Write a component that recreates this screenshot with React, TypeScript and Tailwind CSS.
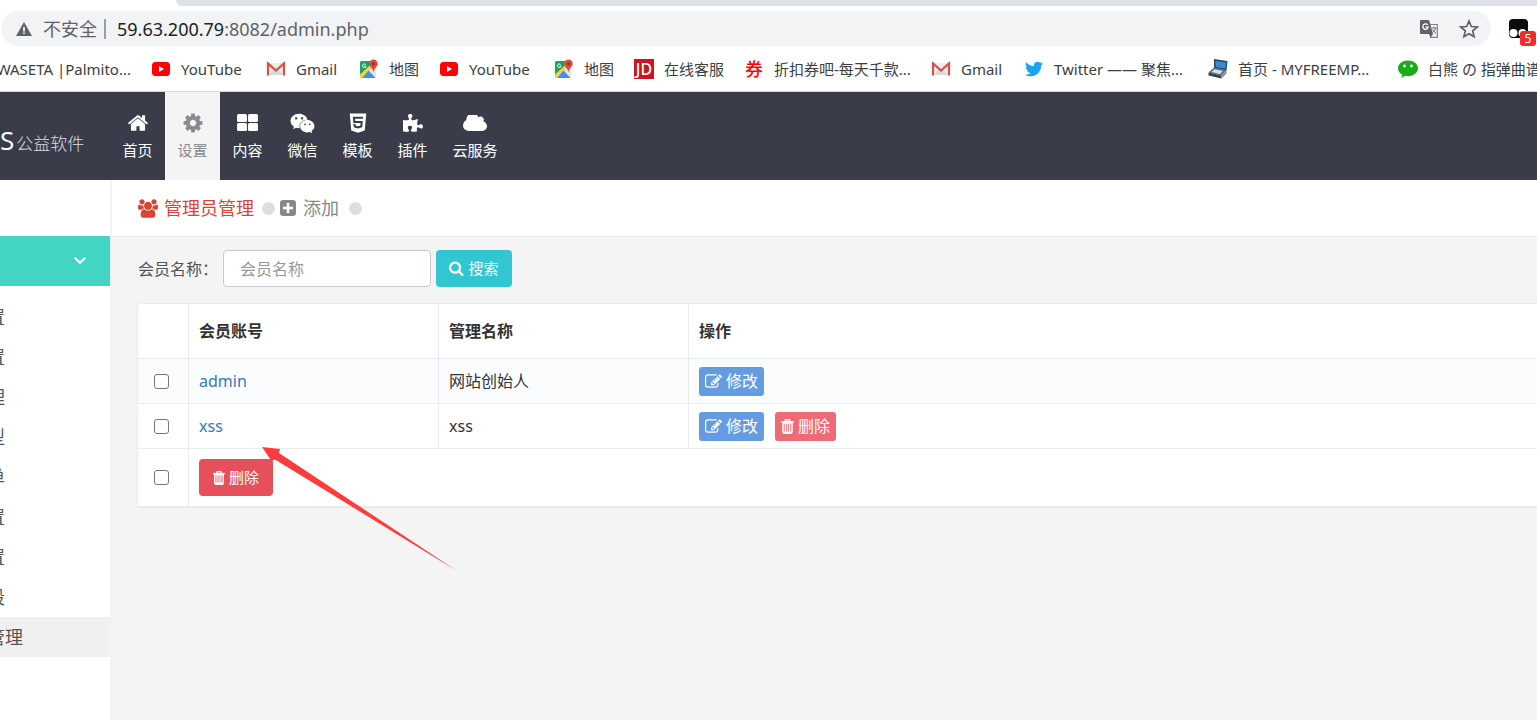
import React from "react";
import { FaHtml5, FaPuzzlePiece, FaTwitter, FaWeixin } from "react-icons/fa";

const HOME =
  "M1472 992v480q0 26-19 45t-45 19h-384v-384h-256v384h-384q-26 0-45-19t-19-45v-480q0-1 .5-3t.5-3l575-474 575 474q1 2 1 6zm223-69l-62 74q-8 9-21 11h-3q-13 0-21-7l-692-577-692 577q-12 8-24 7-13-2-21-11l-62-74q-8-10-7-23.5t11-21.5l719-599q32-26 76-26t76 26l244 204v-195q0-14 9-23t23-9h192q14 0 23 9t9 23v408l219 182q10 8 11 21.5t-7 23.5z";
const COG =
  "M1152 896q0-106-75-181t-181-75-181 75-75 181 75 181 181 75 181-75 75-181zm512-109v222q0 12-8 23t-20 13l-185 28q-19 54-39 91 35 50 107 138 10 12 10 25t-9 23q-27 37-99 108t-94 71q-12 0-26-9l-138-108q-44 23-91 38-16 136-29 186-7 28-36 28h-222q-14 0-24.5-8.5t-11.5-21.5l-28-184q-49-16-90-37l-141 107q-10 9-25 9-14 0-25-11-126-114-165-168-7-10-7-23 0-12 8-23 15-21 51-66.5t54-70.5q-27-50-41-99l-183-27q-13-2-21-12.5t-8-23.5v-222q0-12 8-23t19-13l186-28q14-46 39-92-40-57-107-138-10-12-10-24 0-10 9-23 26-36 98.5-107.5t94.5-71.5q13 0 26 10l138 107q44-23 91-38 16-136 29-186 7-28 36-28h222q14 0 24.5 8.5t11.5 21.5l28 184q49 16 90 37l142-107q9-9 24-9 13 0 25 10 129 119 165 170 7 8 7 22 0 12-8 23-15 21-51 66.5t-54 70.5q26 50 41 98l183 28q13 2 21 12.5t8 23.5z";
const CLOUD =
  "M1984 1152q0 159-112.5 271.5t-271.5 112.5h-1088q-185 0-316.5-131.5t-131.5-316.5q0-132 71-241.5t187-163.5q-2-28-2-43 0-212 150-362t362-150q158 0 286.5 88t187.5 230q70-62 166-62 106 0 181 75t75 181q0 75-41 138 129 30 213 134.5t84 239.5z";
const SEARCH =
  "M1216 832q0-185-131.5-316.5t-316.5-131.5-316.5 131.5-131.5 316.5 131.5 316.5 316.5 131.5 316.5-131.5 131.5-316.5zm512 832q0 52-38 90t-90 38q-54 0-90-38l-343-342q-179 124-399 124-143 0-273.5-55.5t-225-150-150-225-55.5-273.5 55.5-273.5 150-225 225-150 273.5-55.5 273.5 55.5 225 150 150 225 55.5 273.5q0 220-124 399l343 343q37 37 37 90z";
const USERS =
  "M529 896q-162 5-265 128h-134q-82 0-138-40.5t-56-118.5q0-353 124-353 6 0 43.5 21t97.5 42.5 119 21.5q67 0 133-23-5 37-5 66 0 159 90 256zm1071 637q0 120-73 189.5t-194 69.5h-874q-121 0-194-69.5t-73-189.5q0-53 3.5-103.5t14-109 26.5-108.5 43-97.5 62-81 85.5-53.5 111.5-20q10 0 43 21.5t73 48 107 48 135 21.5 135-21.5 107-48 73-48 43-21.5q61 0 111.5 20t85.5 53.5 62 81 43 97.5 26.5 108.5 14 109 3.5 103.5zm-1024-1277q0 106-75 181t-181 75-181-75-75-181 75-181 181-75 181 75 75 181zm704 384q0 159-112.5 271.5t-271.5 112.5-271.5-112.5-112.5-271.5 112.5-271.5 271.5-112.5 271.5 112.5 112.5 271.5zm576 225q0 78-56 118.5t-138 40.5h-134q-103-123-265-128 90-97 90-256 0-29-5-66 66 23 133 23 59 0 119-21.5t97.5-42.5 43.5-21q124 0 124 353zm-128-609q0 106-75 181t-181 75-181-75-75-181 75-181 181-75 181 75 75 181z";
const EDIT =
  "M888 1184l116-116-152-152-116 116v56h96v96h56zm440-720q-16-16-33 1l-350 350q-17 17-1 33t33-1l350-350q17-17 1-33zm80 594v190q0 119-84.5 203.5t-203.5 84.5h-832q-119 0-203.5-84.5t-84.5-203.5v-832q0-119 84.5-203.5t203.5-84.5h832q63 0 117 25 15 7 18 23 3 17-9 29l-49 49q-14 14-32 8-23-6-45-6h-832q-66 0-113 47t-47 113v832q0 66 47 113t113 47h832q66 0 113-47t47-113v-126q0-13 9-22l64-64q15-15 35-7t20 29zm-96-738l288 288-672 672h-288v-288zm444 132l-92 92-288-288 92-92q28-28 68-28t68 28l152 152q28 28 28 68t-28 68z";

function Glyph({ d, box = "0 0 1792 1792", className }: { d: string; box?: string; className: string }) {
  return (
    <svg viewBox={box} className={className} fill="currentColor" aria-hidden="true">
      <path d={d} />
    </svg>
  );
}

function Trash({ className }: { className: string }) {
  return (
    <svg viewBox="0 0 12 14" className={className} fill="none" stroke="currentColor" aria-hidden="true">
      <path d="M0 2.600h12" strokeWidth="1.500" />
      <path d="M1.800 2v10.200q0 1 1 1h6.400q1 0 1-1V2M4 2.300V1.200q0-.6.6-.6h2.800q.6 0 .6.6v1.100" strokeWidth="1.400" />
      <path d="M4 3v9M6 3v9M8 3v9" strokeWidth="1.200" />
      <path d="M2 3.500h8M2 12.500h8" strokeWidth="1.800" />
    </svg>
  );
}

function YouTube() {
  return (
    <svg viewBox="0 0 20 20" className="size-5" aria-hidden="true">
      <rect x="1" y="3" width="18" height="14" rx="3.500" fill="#f00" />
      <path d="M8 7v6l5-3z" fill="#fff" />
    </svg>
  );
}

function Gmail() {
  return (
    <svg viewBox="0 0 20 20" className="size-5" aria-hidden="true">
      <path d="M1 4h18v12H1z" fill="#ececec" />
      <path d="M3 16l5-6 2 1 2-1 5 6z" fill="#dadada" />
      <path d="M2 16.500V4.500l8 7 8-7v12" fill="none" stroke="#db5046" strokeWidth="2.200" />
    </svg>
  );
}

function Maps() {
  return (
    <svg viewBox="0 0 20 20" className="size-5" aria-hidden="true">
      <rect x="1" y="2" width="16" height="17" rx="1.500" fill="#e4e4e4" />
      <path d="M2.500 2H13L9 10 1 17V3.500Q1 2 2.500 2z" fill="#1da261" />
      <path d="M1 15.500 12.500 5l2 2L3 19H2q-1 0-1-1z" fill="#fcd043" />
      <path d="M3 19l6.500-7.500L16.500 19z" fill="#4a8af4" />
      <path d="M6.500 5.500A1.800 1.800 0 1 0 7 7.200H5.500" fill="none" stroke="#fff" strokeWidth="1" />
      <path d="M14.500.500a4.300 4.300 0 0 1 4.300 4.300c0 3-3.500 3.800-4.300 8.700-.8-4.900-4.300-5.700-4.300-8.700A4.300 4.300 0 0 1 14.500.500z" fill="#dd4b3e" />
      <circle cx="14.500" cy="4.800" r="1.500" fill="#822f2b" />
    </svg>
  );
}

function Jd() {
  return (
    <span className="flex size-5 items-center justify-center bg-[#c81623] text-base leading-5 font-medium text-white">
      JD
    </span>
  );
}

function Coupon() {
  return <span className="flex size-5 items-center justify-center text-lg leading-5 font-medium text-[#f00]">券</span>;
}

function Twitter() {
  return (
    <span className="flex size-5 items-center justify-center">
      <FaTwitter className="size-[18px] text-[#1da1f2]" />
    </span>
  );
}

function Scanner() {
  return (
    <svg viewBox="0 0 20 20" className="size-5" aria-hidden="true">
      <path d="M6 0l13.500 2-1 9.500-12.500-2z" fill="#1c4f7c" />
      <path d="M7.500 2l10.500 1.500-.8 6-9.400-1.500z" fill="#3f87c6" />
      <path d="M.500 13.500l5.500-5 12.500 2.500-5 5.500z" fill="#5f6e79" />
      <path d="M3.500 13l3-2.800 8.500 1.800-3 3z" fill="#cfe3f2" />
      <path d="M.500 13.500l13 3v3L.500 16.500z" fill="#39424a" />
      <path d="M13.500 16.500l5-5.500v3.500l-5 5z" fill="#8390a0" />
    </svg>
  );
}

function Bubble() {
  return (
    <svg viewBox="0 0 20 20" className="size-5" aria-hidden="true">
      <path d="M10 1.500c5.600 0 10 3.500 10 7.800s-4.400 7.900-10 7.900c-1 0-2-.1-2.900-.4L3.500 19l.8-3.300C1.700 14.300 0 12 0 9.300 0 5 4.400 1.500 10 1.500z" fill="#1aad19" />
      <circle cx="6.500" cy="7" r="1.400" fill="#fff" />
      <circle cx="13.500" cy="7" r="1.400" fill="#fff" />
    </svg>
  );
}

const bookmarks = [
  { label: "YouTube", Icon: YouTube, width: "w-[115px]" },
  { label: "Gmail", Icon: Gmail, width: "w-[93px]" },
  { label: "地图", Icon: Maps, width: "w-[80px]" },
  { label: "YouTube", Icon: YouTube, width: "w-[115px]" },
  { label: "地图", Icon: Maps, width: "w-[80px]" },
  { label: "在线客服", Icon: Jd, width: "w-[110px]" },
  { label: "折扣券吧-每天千款...", Icon: Coupon, width: "w-[187px]" },
  { label: "Gmail", Icon: Gmail, width: "w-[93px]" },
  { label: "Twitter —— 聚焦...", Icon: Twitter, width: "w-[184px]" },
  { label: "首页 - MYFREEMP...", Icon: Scanner, width: "w-[190px]" },
  { label: "白熊 の 指弹曲谱", Icon: Bubble, width: "w-[150px]" },
];

function Browser() {
  return (
    <div className="border-b border-[#d5d7da] bg-white">
      <div className="ml-[176px] h-[6px] rounded-bl-lg bg-[#dee1e6]" />
      <div className="flex items-center pt-[5px]">
        <div className="ml-px flex h-[35px] min-w-0 flex-1 items-center rounded-full bg-[#f1f3f4] pr-3 pl-[15px]">
          <svg viewBox="0 0 16 14" className="h-[14px] w-4" aria-hidden="true">
            <path d="M8 0l8 14H0z" fill="#5f6368" />
            <path d="M7.200 5h1.600v4.500H7.200zM7.200 10.500h1.600v1.600H7.200z" fill="#fff" />
          </svg>
          <span className="ml-[11px] text-lg leading-6 text-[#5f6368]">不安全</span>
          <span className="mx-[7px] h-5 w-[2px] bg-[#9a9da1]" />
          <span className="ml-1 flex-1 text-lg leading-6 text-[#5f6368]">
            <span className="text-[#202124]">59.63.200.79</span>:8082/admin.php
          </span>
          <button aria-label="翻译" className="mr-5">
            <svg viewBox="0 0 20 20" className="size-5" aria-hidden="true">
              <path d="M8 5.500h10.300v12.800H11" fill="#f1f3f4" stroke="#7d8185" strokeWidth="1.200" />
              <path d="M2 1h8l4 14H2q-1 0-1-1V2q0-1 1-1z" fill="#5f6368" />
              <path d="M10 15h4l-2.500 3.500z" fill="#5f6368" />
              <path d="M8.700 6A2.700 2.700 0 1 0 9.200 8.200H6.500" fill="none" stroke="#fff" strokeWidth="1.300" />
              <path d="M12.500 9h5M15 7.700V9M16.500 9c-.5 2.500-2 4-3 4.800M13.800 10.500c.5 1.500 2 3 3.200 4" fill="none" stroke="#6d7175" strokeWidth="1" />
            </svg>
          </button>
          <button aria-label="收藏">
            <svg viewBox="0 0 20 20" className="size-5" aria-hidden="true">
              <path d="M10 2l2.300 5.500 6 .5-4.600 3.900 1.400 5.900L10 14.700l-5.100 3.100 1.400-5.900L1.700 8l6-.5z" fill="none" stroke="#5f6368" strokeWidth="1.700" />
            </svg>
          </button>
        </div>
        <button aria-label="扩展程序" className="relative ml-[17px] h-[35px] w-[29px]">
          <svg viewBox="0 0 20 20" className="size-5" aria-hidden="true">
            <rect x="1" y="0" width="19" height="19" rx="4" fill="#0c0c0c" />
            <circle cx="5.500" cy="14" r="4" fill="#fff" />
            <circle cx="14.500" cy="14" r="4" fill="#fff" />
          </svg>
          <span className="absolute top-5 left-3 h-[15px] w-4 rounded-[3px] bg-[#ee2c2c] text-center text-xs leading-[15px] text-white">
            5
          </span>
        </button>
      </div>
      <nav className="flex h-[45px] items-center overflow-hidden text-[15px] leading-5 whitespace-nowrap text-[#3c4043]">
        <a href="#waseta" className="mr-5 flex w-[131px] shrink-0 justify-end">
          WASETA |Palmito...
        </a>
        {bookmarks.map(({ label, Icon, width }, i) => (
          <a key={i} href="#bookmark" className={`flex shrink-0 items-center gap-[10px] ${width}`}>
            <Icon />
            {label}
          </a>
        ))}
      </nav>
    </div>
  );
}

const tabs = [
  { label: "首页", width: "w-[55px]", active: false, icon: <Glyph d={HOME} className="size-[22px]" /> },
  { label: "设置", width: "w-[55px]", active: true, icon: <Glyph d={COG} className="size-[22px]" /> },
  {
    label: "内容",
    width: "w-[55px]",
    active: false,
    icon: (
      <svg viewBox="0 0 21 18" className="h-[18px] w-[21px]" fill="currentColor" aria-hidden="true">
        <rect width="10" height="8" rx="1.500" />
        <rect x="11" width="10" height="8" rx="1.500" />
        <rect y="9" width="10" height="8" rx="1.500" />
        <rect x="11" y="9" width="10" height="8" rx="1.500" />
      </svg>
    ),
  },
  { label: "微信", width: "w-[55px]", active: false, icon: <FaWeixin className="size-[25px]" /> },
  { label: "模板", width: "w-[55px]", active: false, icon: <FaHtml5 className="size-[22px]" /> },
  { label: "插件", width: "w-[55px]", active: false, icon: <FaPuzzlePiece className="size-5" /> },
  {
    label: "云服务",
    width: "w-[70px]",
    active: false,
    icon: <Glyph d={CLOUD} box="64 256 1920 1280" className="h-4 w-6" />,
  },
];

function Header() {
  return (
    <header className="flex h-[88px] bg-[#3a3d49] text-white">
      <div className="flex w-[110px] shrink-0 items-baseline pt-7">
        <span className="font-['Open_Sans','Noto_Sans',sans-serif] text-[26px] leading-10">S</span>
        <span className="ml-[2px] text-[17px] leading-10 font-light text-[#dcdde0]">公益软件</span>
      </div>
      <nav className="flex">
        {tabs.map((t) => (
          <a
            key={t.label}
            href="#tab"
            className={`flex flex-col items-center pt-[18px] text-[15px] leading-[22px] ${t.width} ${
              t.active ? "bg-[#f4f4f4] text-[#898b90]" : ""
            }`}
          >
            <span className="mb-[3px] flex h-[26px] items-center">{t.icon}</span>
            <span>{t.label}</span>
          </a>
        ))}
      </nav>
    </header>
  );
}

const menu = ["置", "置", "理", "型", "单", "置", "置", "段"];

function Sidebar() {
  return (
    <aside className="w-[110px] shrink-0 bg-white pt-14 text-lg text-[#555]">
      <button aria-label="展开菜单" className="flex h-[50px] w-full items-center justify-end bg-[#41d5c2] pr-6 text-white">
        <svg viewBox="0 0 12 12" className="size-3" fill="none" stroke="currentColor" strokeWidth="2.200" aria-hidden="true">
          <path d="M.800 2.800 6 7.800l5.200-5" />
        </svg>
      </button>
      <ul className="pt-[11px]">
        {menu.map((m, i) => (
          <li key={i}>
            <a href="#menu" className="flex h-10 w-[5px] items-center justify-end overflow-hidden">
              {m}
            </a>
          </li>
        ))}
        <li className="bg-[#f0f0f0]">
          <a href="#admins" className="flex h-10 w-[23px] items-center justify-end overflow-hidden whitespace-nowrap">
            管理
          </a>
        </li>
      </ul>
    </aside>
  );
}

function EditButton() {
  return (
    <button className="flex h-[29px] w-[65px] items-center justify-center gap-1 rounded-[3px] bg-[#659be0] text-base text-white">
      <Glyph d={EDIT} box="0 0 1792 1664" className="h-4 w-[17px]" />
      修改
    </button>
  );
}

function Check({ label }: { label: string }) {
  return (
    <input
      type="checkbox"
      aria-label={label}
      className="mx-[6px] block size-[15px] appearance-none rounded-[3px] border border-[#767676] bg-white checked:bg-[#659be0]"
    />
  );
}

function Members() {
  const cell = "border-r border-b border-[#e7ecf1] px-[10px] text-left";
  const last = "border-b border-[#e7ecf1] px-[10px] text-left";
  return (
    <table className="w-full table-fixed border-separate border-spacing-0 rounded-tl border-t border-l border-[#e7ecf1] bg-white text-base text-[#333] shadow-[0_1px_1px_rgba(0,0,0,0.05)]">
      <colgroup>
        <col className="w-[51px]" />
        <col className="w-[250px]" />
        <col className="w-[250px]" />
        <col />
      </colgroup>
      <thead>
        <tr className="h-[55px]">
          <th className={cell} />
          <th className={cell}>会员账号</th>
          <th className={cell}>管理名称</th>
          <th className={last}>操作</th>
        </tr>
      </thead>
      <tbody>
        <tr className="h-[45px] bg-[#fbfcfd]">
          <td className={cell}><Check label="admin" /></td>
          <td className={cell}><a href="#admin" className="text-[#337ab7]">admin</a></td>
          <td className={cell}>网站创始人</td>
          <td className={last}><EditButton /></td>
        </tr>
        <tr className="h-[45px]">
          <td className={cell}><Check label="xss" /></td>
          <td className={cell}><a href="#xss" className="text-[#337ab7]">xss</a></td>
          <td className={cell}>xss</td>
          <td className={last}>
            <div className="flex gap-[11px]">
              <EditButton />
              <button className="flex h-[29px] w-[61px] items-center justify-center gap-1 rounded-[3px] bg-[#ed6b75] text-base text-white">
                <Trash className="h-[15px] w-[13px]" />
                删除
              </button>
            </div>
          </td>
        </tr>
        <tr className="h-[58px]">
          <td className={cell}><Check label="全选" /></td>
          <td colSpan={3} className={last}>
            <button className="flex h-[37px] w-[74px] items-center justify-center gap-1 rounded bg-[#e7505a] text-[15px] text-white">
              <Trash className="h-[14px] w-3" />
              删除
            </button>
          </td>
        </tr>
      </tbody>
    </table>
  );
}

export default function App() {
  return (
    <div className="relative flex min-h-screen flex-col overflow-hidden bg-[#f4f4f4] font-['Noto_Sans','Noto_Sans_CJK_SC',sans-serif]">
      <Browser />
      <Header />
      <div className="flex flex-1">
        <Sidebar />
        <main className="min-w-0 flex-1 border-l-2 border-[#f1f4f7]">
          <div className="flex h-[57px] items-center border-b border-[#e7ecf1] bg-white pl-[26px] text-lg">
            <a href="#list" className="flex items-center gap-[6px] text-[#d64635]">
              <Glyph d={USERS} box="-64 0 1920 1792" className="h-[19px] w-5" />
              管理员管理
            </a>
            <span className="ml-2 size-[13px] rounded-full bg-[#ddd]" />
            <a href="#add" className="ml-[5px] flex items-center gap-[7px] text-[#888]">
              <svg viewBox="0 0 16 16" className="size-4" aria-hidden="true">
                <rect width="16" height="16" rx="3" fill="currentColor" />
                <path d="M8 3v10M3 8h10" stroke="#fff" strokeWidth="2.600" />
              </svg>
              添加
            </a>
            <span className="ml-[10px] size-[13px] rounded-full bg-[#ddd]" />
          </div>
          <form className="flex items-center pt-[13px] pl-[26px] text-base text-[#555]" onSubmit={(e) => e.preventDefault()}>
            <label htmlFor="member" className="w-[85px] shrink-0">会员名称：</label>
            <input
              id="member"
              placeholder="会员名称"
              className="h-[37px] w-[208px] rounded border border-[#c2cad8] bg-white px-4 placeholder:text-[#999]"
            />
            <button className="ml-[5px] flex h-[37px] w-[76px] items-center justify-center gap-1 rounded bg-[#32c5d2] text-[15px] text-white">
              <Glyph d={SEARCH} box="64 64 1728 1728" className="size-[15px]" />
              搜索
            </button>
          </form>
          <div className="pt-4 pl-[25px]">
            <Members />
          </div>
        </main>
      </div>
      <svg
        viewBox="0 0 195 124"
        className="pointer-events-none absolute top-[447px] left-[262px] h-[124px] w-[195px]"
        fill="#ff3b3b"
        aria-hidden="true"
      >
        <path d="M0 0l18 2-1 4 178 118L13 12.500l-3.500 1.500z" />
      </svg>
    </div>
  );
}
